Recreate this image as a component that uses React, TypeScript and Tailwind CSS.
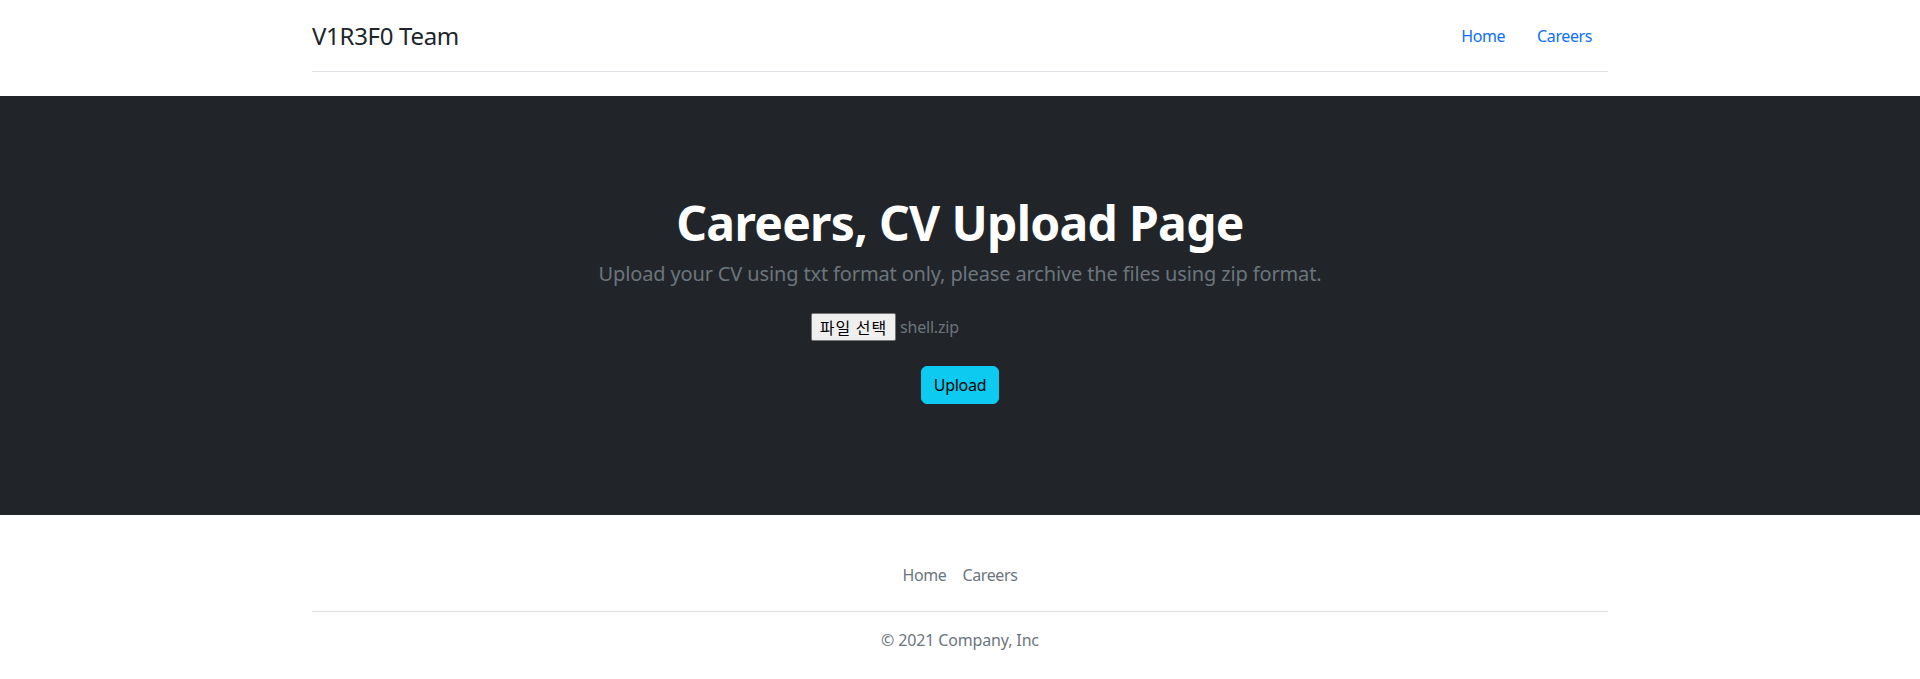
import React from "react";

export default function App() {
  return (
    <div className="bg-white text-[#212529] text-base leading-6 font-['Noto_Sans','Noto_Sans_CJK_KR',sans-serif]">
      <div className="mx-auto w-[1296px]">
        <header className="flex items-center justify-between pt-4 pb-[15px] mb-6 border-b border-[#dee2e6]">
          <a className="flex items-center text-[24px] leading-9 text-[#212529] tracking-[-0.3px]">
            <span>V1R3F0 Team</span>
          </a>
          <ul className="flex tracking-[-0.4px]">
            <li>
              <a className="block px-4 py-2 text-[#0d6efd]">Home</a>
            </li>
            <li>
              <a className="block px-4 py-2 text-[#0d6efd]">Careers</a>
            </li>
          </ul>
        </header>
      </div>

      <section className="bg-[#212529] h-[419px] pt-[98px] text-center">
        <h1 className="text-[48px] font-bold leading-[1.2] text-white mb-[7px] tracking-[-0.7px]">
          Careers, CV Upload Page
        </h1>
        <p className="text-[20px] leading-[1.5] text-[#6c757d] mb-6 tracking-[-0.14px]">
          Upload your CV using txt format only, please archive the files using zip format.
        </p>
        <div className="flex justify-center">
          <div className="w-[298px] flex items-center text-[#6c757d]">
            <span className="inline-flex items-center justify-center w-[85px] h-[28px] bg-[#efefef] border border-[#767676] rounded-[2px] text-black mr-1 tracking-[1px] font-['Noto_Sans_CJK_KR',sans-serif]">
              파일 선택
            </span>
            <span className="tracking-[-0.2px]">shell.zip</span>
          </div>
        </div>
        <div className="flex justify-center mt-[25px]">
          <button className="h-[38px] px-3 bg-[#0dcaf0] border border-[#0dcaf0] rounded-[6px] text-black leading-6 tracking-[-0.3px]">
            Upload
          </button>
        </div>
      </section>

      <div className="mx-auto w-[1296px]">
        <footer className="py-4 my-6">
          <ul className="flex justify-center border-b border-[#dee2e6] pb-4 mb-4 tracking-[-0.4px]">
            <li>
              <a className="block px-2 py-2 text-[#6c757d]">Home</a>
            </li>
            <li>
              <a className="block px-2 py-2 text-[#6c757d]">Careers</a>
            </li>
          </ul>
          <p className="text-center text-[#6c757d] tracking-[-0.15px]">© 2021 Company, Inc</p>
        </footer>
      </div>
    </div>
  );
}
